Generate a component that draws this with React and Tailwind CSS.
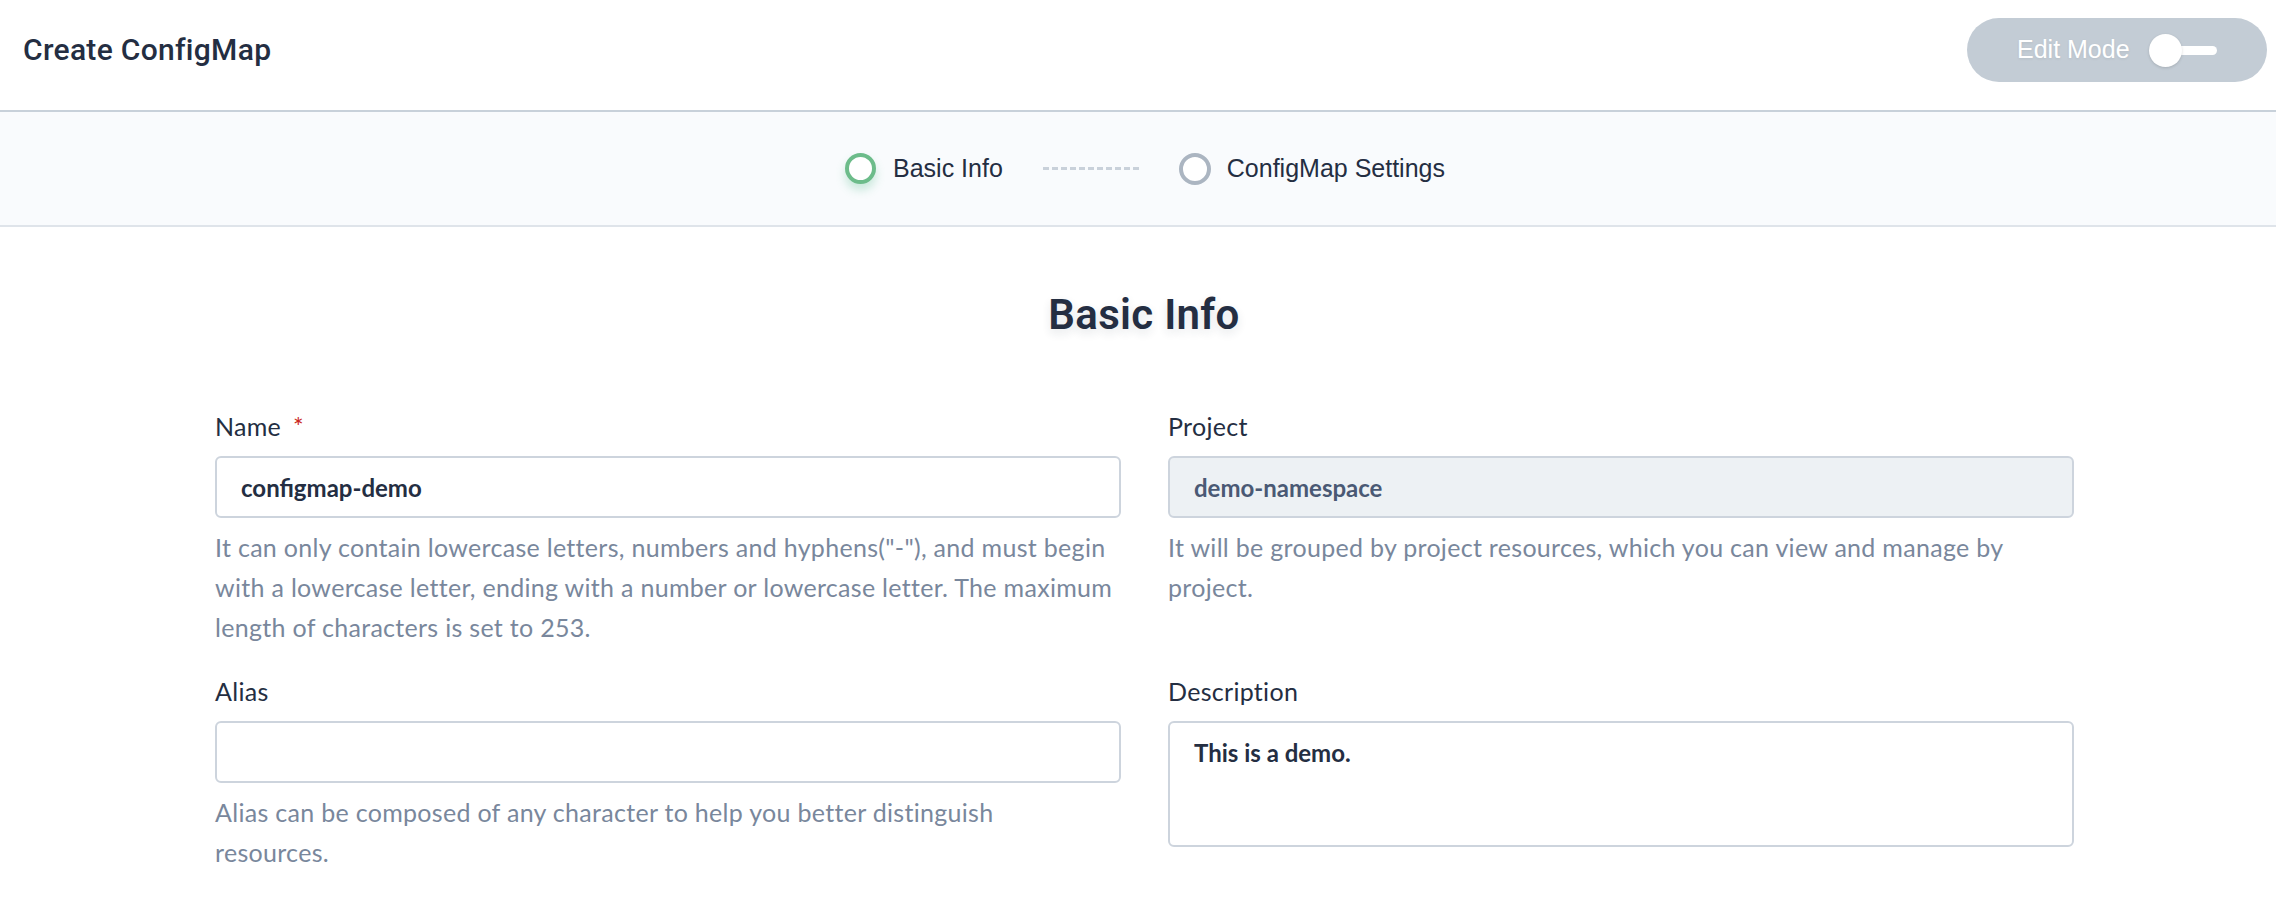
import { useState } from 'react'

const fieldFont = { fontFamily: 'Lato, "Open Sans", sans-serif' }

function Field({ label, required, hint, children }) {
  return (
    <div className="flex flex-col">
      <label className="text-[25px] leading-[40px] tracking-[0.3px] text-[#242e42] flex items-center">
        {label}
        {required && <span className="ml-[12px] text-[#ca2621]">*</span>}
      </label>
      <div className="mt-[10px]">{children}</div>
      {hint && (
        <p className="mt-[9px] w-[899px] text-[25px] leading-[40px] tracking-[0.3px] text-[#79879c]">{hint}</p>
      )}
    </div>
  )
}

export default function App() {
  const [editMode] = useState(false)

  return (
    <div className="w-[2276px] min-h-[906px] bg-white" style={{ fontFamily: '"Liberation Sans", Arial, sans-serif' }}>
      {/* Header */}
      <header className="h-[112px] flex items-center justify-between pl-[23px] pr-[9px] border-b-2 border-[#c8d1da]">
        <h1 className="-mt-[12px] text-[30px] font-medium text-[#242e42] tracking-[0.3px]" style={{ fontFamily: 'Roboto, sans-serif' }}>
          Create ConfigMap
        </h1>
        <button className="-mt-[10px] w-[300px] h-[64px] rounded-full bg-[#c3ccd5] flex items-center pl-[50px]">
          <span className="text-[25px] text-white [text-shadow:0_1px_3px_rgba(0,0,0,0.08)]">Edit Mode</span>
          <span className="ml-[19px] relative w-[68px] h-[34px] flex items-center">
            <span className="absolute left-[10px] right-0 h-[9px] rounded-full bg-white" />
            <span className={`absolute left-0 w-[33px] h-[33px] rounded-full bg-white shadow-[0_1px_3px_rgba(0,0,0,0.15)] ${editMode ? 'translate-x-[35px]' : ''}`} />
          </span>
        </button>
      </header>

      {/* Steps */}
      <div className="h-[115px] bg-[#f9fbfd] border-b-2 border-[#dfe4ea] flex items-center justify-center pl-[14px]">
        <div className="flex items-center">
          <span className="w-[31px] h-[31px] rounded-full border-[4px] border-[#6cbc8a] bg-white shadow-[0_6px_10px_rgba(85,188,138,0.3)]" />
          <span className="ml-[17px] text-[25px] text-[#242e42]">Basic Info</span>
        </div>
        <div className="mx-[40px] w-[96px] border-t-[3px] border-dashed border-[#c9d1da]" />
        <div className="flex items-center">
          <span className="w-[32px] h-[32px] rounded-full border-[4px] border-[#abb5c1] bg-white" />
          <span className="ml-[16px] text-[25px] text-[#242e42]">ConfigMap Settings</span>
        </div>
      </div>

      {/* Body */}
      <div className="pt-[58px]">
        <h2 className="text-center text-[42px] leading-[60px] font-semibold text-[#242e42] pl-[12px] tracking-[0.3px] [text-shadow:0_4px_10px_rgba(36,46,66,0.12)]" style={{ fontFamily: 'Roboto, sans-serif' }}>
          Basic Info
        </h2>

        <div className="ml-[215px] w-[1859px] mt-[61px] grid grid-cols-2 gap-x-[47px] gap-y-[24px]" style={fieldFont}>
          <Field
            label="Name"
            required
            hint={'It can only contain lowercase letters, numbers and hyphens("-"), and must begin with a lowercase letter, ending with a number or lowercase letter. The maximum length of characters is set to 253.'}
          >
            <input
              readOnly
              value="configmap-demo"
              className="w-full h-[62px] rounded-[6px] border-2 border-[#cdd4dd] px-[24px] text-[24px] font-bold text-[#242e42] outline-none"
              style={fieldFont}
            />
          </Field>

          <Field
            label="Project"
            hint="It will be grouped by project resources, which you can view and manage by project."
          >
            <input
              readOnly
              value="demo-namespace"
              className="w-full h-[62px] rounded-[6px] border-2 border-[#cdd4dd] bg-[#edf1f4] px-[24px] text-[24px] font-bold text-[#4a5974] outline-none"
              style={fieldFont}
            />
          </Field>

          <Field
            label="Alias"
            hint="Alias can be composed of any character to help you better distinguish resources."
          >
            <input
              readOnly
              value=""
              className="w-full h-[62px] rounded-[6px] border-2 border-[#cdd4dd] px-[24px] text-[24px] text-[#242e42] outline-none"
              style={fieldFont}
            />
          </Field>

          <Field label="Description">
            <textarea
              readOnly
              value="This is a demo."
              className="block w-full h-[126px] rounded-[6px] border-2 border-[#cdd4dd] px-[24px] pt-[14px] text-[24px] leading-[32px] font-bold text-[#242e42] outline-none resize-none"
              style={fieldFont}
            />
          </Field>
        </div>
      </div>
    </div>
  )
}
